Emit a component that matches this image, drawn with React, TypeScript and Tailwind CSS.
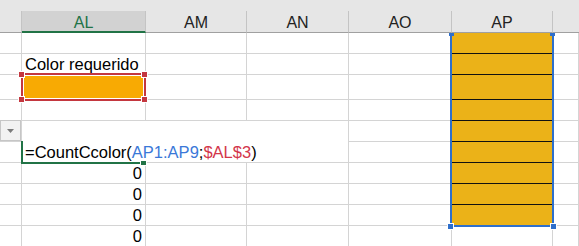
import type { ReactNode } from "react";

// column widths: the right gridline of each cell lands on its column edge
const COLS = [
  "w-[22px]",
  "w-[124px]",
  "w-[101px]",
  "w-[102px]",
  "w-[103px]",
  "w-[101px]",
  "min-w-0 flex-1",
];

const HEADERS = ["", "AL", "AM", "AN", "AO", "AP", ""];

type SheetRow = {
  h: string;
  al?: ReactNode;
  alClass?: string;
  apFill: boolean;
  apLine: boolean;
};

const ROWS: SheetRow[] = [
  { h: "h-[21px]", apFill: true, apLine: true },
  { h: "h-[21px]", al: "Color requerido", alClass: "pl-[3px]", apFill: true, apLine: true },
  { h: "h-[25px]", alClass: "bg-[#f8aa03]", apFill: true, apLine: true },
  { h: "h-[21px]", apFill: true, apLine: true },
  { h: "h-[21px]", apFill: true, apLine: true },
  { h: "h-[21px]", apFill: true, apLine: true },
  { h: "h-[21px]", al: "0", alClass: "pr-[3px] text-right", apFill: true, apLine: true },
  { h: "h-[21px]", al: "0", alClass: "pr-[3px] text-right", apFill: true, apLine: true },
  { h: "h-[21px]", al: "0", alClass: "pr-[3px] text-right", apFill: true, apLine: false },
  { h: "h-[21px]", al: "0", alClass: "pr-[3px] text-right", apFill: false, apLine: false },
];

function HeaderRow() {
  return (
    <div className="flex h-[22px]">
      {HEADERS.map((label, i) =>
        label === "AL" ? (
          <div
            key={i}
            className={`${COLS[i]} shrink-0 border-r border-b-2 border-r-[#c4c4c4] border-b-[#217346] bg-[#d2d2d2] pt-px text-center text-[16px] leading-[21px] text-[#217346]`}
          >
            {label}
          </div>
        ) : (
          <div
            key={i}
            className={`${COLS[i]} shrink-0 border-b border-b-[#a0a0a0] bg-[#e6e6e6] pt-px text-center text-[16px] leading-[21px] text-[#222] ${
              i < 6 ? "border-r border-r-[#c4c4c4]" : ""
            }`}
          >
            {label}
          </div>
        )
      )}
    </div>
  );
}

function BodyRow({ row }: { row: SheetRow }) {
  return (
    <div className={`flex ${row.h}`}>
      {COLS.map((w, i) => {
        let cls = "border-r border-b border-[#d4d4d4]";
        let content: ReactNode = null;
        if (i === 1) {
          cls += ` ${row.alClass ?? ""}`;
          content = row.al;
        }
        if (i === 5 && row.apFill) {
          cls = row.apLine
            ? "border-r border-b border-r-[#d4d4d4] border-b-[#111] bg-[#ebb218]"
            : "border-r border-b border-[#d4d4d4] bg-[#ebb218]";
        }
        return (
          <div key={i} className={`${w} shrink-0 whitespace-nowrap leading-[21px] ${cls}`}>
            {content}
          </div>
        );
      })}
    </div>
  );
}

// square grip drawn on a corner of a reference frame
function Grip({ pos, color }: { pos: string; color: string }) {
  return <span className={`absolute h-[7px] w-[7px] border border-white ${pos} ${color}`} />;
}

export default function App() {
  return (
    <div className="relative h-[246px] w-[579px] overflow-hidden bg-white font-['Liberation_Sans',Arial,sans-serif] text-[16.5px] text-black">
      <div className="h-[11px] bg-[#e6e6e6]" />
      <HeaderRow />
      {ROWS.map((row, i) => (
        <BodyRow key={i} row={row} />
      ))}

      {/* reference frame around $AL$3 */}
      <div className="absolute left-[21px] top-[73px] h-[28px] w-[125px] border-2 border-[#c4373f] shadow-[inset_0_0_0_1px_#fff]">
        <Grip pos="-left-[5px] -top-[4px]" color="bg-[#c4373f]" />
        <Grip pos="-right-[4px] -top-[4px]" color="bg-[#c4373f]" />
        <Grip pos="-left-[5px] -bottom-[4px]" color="bg-[#c4373f]" />
        <Grip pos="-right-[4px] -bottom-[4px]" color="bg-[#c4373f]" />
      </div>

      {/* reference frame around AP1:AP9, top edge runs under the header */}
      <div className="absolute left-[450px] top-[33px] h-[194px] w-[104px] border-x-2 border-b-2 border-[#2e6fcb]">
        <span className="absolute -left-[3px] top-0 h-[3px] w-[5px] bg-[#2e6fcb]" />
        <span className="absolute -right-[3px] top-0 h-[3px] w-[5px] bg-[#2e6fcb]" />
        <Grip pos="-left-[5px] -bottom-[5px]" color="bg-[#2e6fcb]" />
        <Grip pos="-right-[5px] -bottom-[5px]" color="bg-[#2e6fcb]" />
      </div>

      {/* autocomplete dropdown */}
      <div className="absolute left-0 top-[120px] flex h-[21px] w-[21px] items-center justify-center border border-[#c6c6c6] bg-[#f2f2f2]">
        <svg width="7" height="4" viewBox="0 0 7 4">
          <path d="M0 0h7L3.5 4z" fill="#7b7b7b" />
        </svg>
      </div>

      {/* in-cell editor with the active cell outline and fill handle */}
      <div className="absolute left-[22px] top-[121px] h-[41px] w-[326px] whitespace-nowrap bg-white pl-[3px] pt-[22px] leading-[19px]">
        =CountCcolor(<span className="text-[#3a78d8]">AP1:AP9</span>;
        <span className="text-[#d3364a]">$AL$3</span>)
        <div className="absolute -left-[1px] top-[20px] h-[23px] w-[119px] border-b-2 border-l-2 border-[#217346]">
          <span className="absolute -right-[7px] -bottom-[4px] h-[6px] w-[7px] border border-white bg-[#217346]" />
        </div>
      </div>
    </div>
  );
}
